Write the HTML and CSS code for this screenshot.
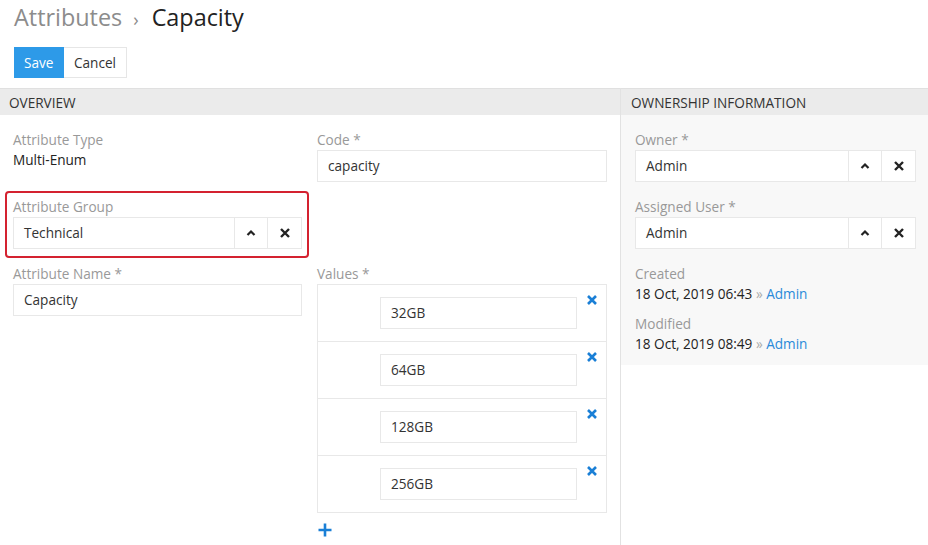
FILE: index.html
```html
<!DOCTYPE html>
<html lang="en">

<head>
    <meta charset="UTF-8">
    <meta name="viewport" content="width=device-width, initial-scale=1.0">
    <title>Capacity</title>
    <link rel="stylesheet" href="styles.css">
</head>

<body>
    <div class="page-header">
        <h1><span class="crumb">Attributes</span><span class="sep">&rsaquo;</span>Capacity</h1>
        <div class="actions">
            <button class="btn btn-primary">Save</button><button class="btn">Cancel</button>
        </div>
    </div>

    <div class="main">
        <div class="panel overview">
            <div class="panel-heading">OVERVIEW</div>
            <div class="panel-body grid">
                <div class="field">
                    <div class="label">Attribute Type</div>
                    <div class="value">Multi-Enum</div>
                </div>
                <div class="field">
                    <div class="label">Code *</div>
                    <div class="input">capacity</div>
                </div>
                <div class="field highlighted">
                    <div class="label">Attribute Group</div>
                    <div class="link-field">
                        <div class="input">Technical</div>
                        <span class="addon">
                            <svg width="10" height="10" viewBox="0 0 10 10"><path d="M1.5 7 L5 3.5 L8.5 7" fill="none" stroke="#222" stroke-width="2.2"/></svg>
                        </span>
                        <span class="addon">
                            <svg width="12" height="12" viewBox="0 0 12 12"><path d="M2 2 L10 10 M10 2 L2 10" stroke="#222" stroke-width="2.4"/></svg>
                        </span>
                    </div>
                </div>
                <div class="field"></div>
                <div class="field">
                    <div class="label">Attribute Name *</div>
                    <div class="input">Capacity</div>
                </div>
                <div class="field">
                    <div class="label">Values *</div>
                    <div class="values">
                        <div class="value-row">
                            <span></span>
                            <div class="input">32GB</div>
                            <span class="remove"><svg width="12" height="12" viewBox="0 0 12 12"><path d="M2 2 L10 10 M10 2 L2 10" stroke="#1a7fd6" stroke-width="2.6"/></svg></span>
                        </div>
                        <div class="value-row">
                            <span></span>
                            <div class="input">64GB</div>
                            <span class="remove"><svg width="12" height="12" viewBox="0 0 12 12"><path d="M2 2 L10 10 M10 2 L2 10" stroke="#1a7fd6" stroke-width="2.6"/></svg></span>
                        </div>
                        <div class="value-row">
                            <span></span>
                            <div class="input">128GB</div>
                            <span class="remove"><svg width="12" height="12" viewBox="0 0 12 12"><path d="M2 2 L10 10 M10 2 L2 10" stroke="#1a7fd6" stroke-width="2.6"/></svg></span>
                        </div>
                        <div class="value-row">
                            <span></span>
                            <div class="input">256GB</div>
                            <span class="remove"><svg width="12" height="12" viewBox="0 0 12 12"><path d="M2 2 L10 10 M10 2 L2 10" stroke="#1a7fd6" stroke-width="2.6"/></svg></span>
                        </div>
                    </div>
                    <div class="add">
                        <svg width="14" height="14" viewBox="0 0 14 14"><path d="M7 0.5 V13.5 M0.5 7 H13.5" stroke="#1a7fd6" stroke-width="2.6"/></svg>
                    </div>
                </div>
            </div>
        </div>

        <div class="side">
            <div class="panel side-panel">
                <div class="panel-heading">OWNERSHIP INFORMATION</div>
                <div class="panel-body">
                    <div class="field">
                        <div class="label">Owner *</div>
                        <div class="link-field">
                            <div class="input">Admin</div>
                            <span class="addon">
                                <svg width="10" height="10" viewBox="0 0 10 10"><path d="M1.5 7 L5 3.5 L8.5 7" fill="none" stroke="#222" stroke-width="2.2"/></svg>
                            </span>
                            <span class="addon">
                                <svg width="12" height="12" viewBox="0 0 12 12"><path d="M2 2 L10 10 M10 2 L2 10" stroke="#222" stroke-width="2.4"/></svg>
                            </span>
                        </div>
                    </div>
                    <div class="field">
                        <div class="label">Assigned User *</div>
                        <div class="link-field">
                            <div class="input">Admin</div>
                            <span class="addon">
                                <svg width="10" height="10" viewBox="0 0 10 10"><path d="M1.5 7 L5 3.5 L8.5 7" fill="none" stroke="#222" stroke-width="2.2"/></svg>
                            </span>
                            <span class="addon">
                                <svg width="12" height="12" viewBox="0 0 12 12"><path d="M2 2 L10 10 M10 2 L2 10" stroke="#222" stroke-width="2.4"/></svg>
                            </span>
                        </div>
                    </div>
                    <div class="field small">
                        <div class="label">Created</div>
                        <div class="value">18 Oct, 2019 06:43 <span class="raquo">&raquo;</span> <a href="#">Admin</a></div>
                    </div>
                    <div class="field small">
                        <div class="label">Modified</div>
                        <div class="value">18 Oct, 2019 08:49 <span class="raquo">&raquo;</span> <a href="#">Admin</a></div>
                    </div>
                </div>
            </div>
        </div>
    </div>
</body>

</html>
```

FILE: styles.css
```css
body {
    margin: 0;
    padding: 0;
    font-family: "Open Sans", sans-serif;
    font-size: 13.6px;
    color: #333;
    height: 545px;
    display: flex;
    flex-direction: column;
    overflow: hidden;
}

.page-header {
    padding: 0 14px;
}

h1 {
    margin: 0;
    font-size: 23.4px;
    font-weight: normal;
    line-height: 34px;
    color: #222;
}

.crumb {
    color: #8c8c8c;
}

.sep {
    color: #8c8c8c;
    font-size: 18px;
    margin: 0 13px 0 11px;
}

.actions {
    display: flex;
    margin: 11px 0 10px 0;
}

.btn {
    height: 31px;
    padding: 0 10px;
    font-family: "Open Sans", sans-serif;
    font-size: 13.6px;
    color: #333;
    background: #fff;
    border: 1px solid #e6e6e6;
    border-left: none;
}

.btn-primary {
    background: #2d9ae8;
    border-color: #2d9ae8;
    color: #fff;
    width: 50px;
}

.main {
    display: flex;
    flex: 1;
}

.overview {
    width: 620px;
}

.side {
    flex: 1;
    border-left: 1px solid #e2e2e2;
}

.panel-heading {
    height: 27px;
    line-height: 27px;
    background: #ebebeb;
    border-top: 1px solid #e0e0e0;
    box-sizing: border-box;
    padding: 0 9px;
    font-size: 13.6px;
    color: #333;
}

.side-panel .panel-heading {
    padding: 0 10px;
}

.panel-body {
    padding: 15px 13px 12px 13px;
}

.side-panel .panel-body {
    background: #f8f8f8;
    padding: 15px 12px 11px 14px;
}

.grid {
    display: grid;
    grid-template-columns: 289px 290px;
    column-gap: 15px;
    align-items: start;
}

.field {
    margin-bottom: 15px;
    position: relative;
}

.field.small {
    margin-bottom: 10px;
}

.field.small:last-child {
    margin-bottom: 0;
}

.label {
    color: #999;
    line-height: 20px;
}

.value {
    line-height: 20px;
    color: #222;
}

.value a {
    color: #2a8ad8;
    text-decoration: none;
}

.raquo {
    color: #aaa;
}

.input {
    height: 32px;
    line-height: 30px;
    box-sizing: border-box;
    border: 1px solid #e8e8e8;
    background: #fff;
    padding: 0 10px;
    color: #333;
}

.link-field {
    display: flex;
}

.link-field .input {
    flex: 1;
    border-right: none;
}

.addon {
    width: 34px;
    height: 32px;
    box-sizing: border-box;
    border: 1px solid #e8e8e8;
    background: #fff;
    display: flex;
    align-items: center;
    justify-content: center;
}

.addon + .addon {
    border-left: none;
}

.highlighted::after {
    content: "";
    position: absolute;
    top: -6px;
    left: -8px;
    right: -7px;
    bottom: -9px;
    border: 2px solid #d42230;
    border-radius: 4px;
}

.values {
    border: 1px solid #e8e8e8;
}

.value-row {
    display: grid;
    grid-template-columns: 62px 197px 30px;
    padding: 12px 0 12px 0;
    border-top: 1px solid #e8e8e8;
}

.value-row:first-child {
    border-top: none;
}

.remove {
    display: flex;
    justify-content: center;
    align-items: flex-start;
    margin-top: -3px;
}

.add {
    padding: 9px 0 0 1px;
}
```
